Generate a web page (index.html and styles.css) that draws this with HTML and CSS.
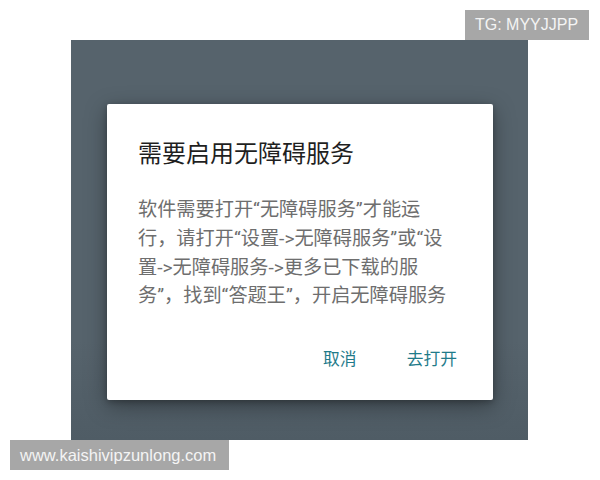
FILE: index.html
```html
<!DOCTYPE html>
<html lang="zh-CN">
<head>
<meta charset="utf-8">
<link rel="stylesheet" href="styles.css">
</head>
<body>
<div class="page">
  <div class="top-row"><span class="badge badge-tg">TG: MYYJJPP</span></div>
  <div class="panel">
    <div class="dialog">
      <h1 class="title">需要启用无障碍服务</h1>
      <p class="message">软件需要打开“无障碍服务”才能运<br>行，请打开“设置-&gt;无障碍服务”或“设<br>置-&gt;无障碍服务-&gt;更多已下载的服<br>务”，找到“答题王”，开启无障碍服务</p>
      <div class="actions">
        <span class="btn">取消</span>
        <span class="btn">去打开</span>
      </div>
    </div>
  </div>
  <div class="bottom-row"><span class="badge badge-url">www.kaishivipzunlong.com</span></div>
</div>
</body>
</html>
```
FILE: styles.css
```css
* { box-sizing: border-box; }
html, body { margin: 0; padding: 0; background: #ffffff; }
body { width: 600px; height: 480px; overflow: hidden; font-family: Roboto, "Noto Sans CJK SC", sans-serif; }
.page { display: flex; flex-direction: column; padding-top: 10px; }
.top-row { display: flex; justify-content: flex-end; padding-right: 11px; }
.badge {
  display: flex; align-items: center; height: 30px;
  background: #a7a7a7; color: #f4f4f4;
  font-family: "Liberation Sans", Arial, sans-serif; font-size: 16px;
}
.badge-tg { width: 124px; padding-left: 10px; }
.panel {
  margin-left: 71px; width: 457px; height: 400px;
  background: linear-gradient(to bottom, #56636c 0%, #56636c 75%, #4f5c65 100%);
  padding: 64px 35px 40px 36px;
}
.dialog {
  width: 386px; height: 296px; background: #ffffff; border-radius: 2px;
  box-shadow: 0 6px 22px rgba(0,0,0,0.35), 0 2px 6px rgba(0,0,0,0.25);
  padding: 34px 20px 0 31px;
  display: flex; flex-direction: column;
  text-spacing-trim: space-all;
}
.title { margin: 0; font-size: 24px; line-height: 32px; font-weight: 400; color: #1f1f1f; }
.message { margin: 26px 0 0; font-size: 19.2px; line-height: 28.8px; color: #6e6e6e; white-space: nowrap; }
.actions { display: flex; justify-content: flex-end; gap: 50px; margin-top: 36px; padding-right: 16px; }
.btn { font-size: 16.8px; line-height: 24px; color: #1f7b8a; }
.bottom-row { display: flex; padding-left: 10px; }
.badge-url { width: 219px; padding-left: 10px; font-size: 16.5px; }
```
